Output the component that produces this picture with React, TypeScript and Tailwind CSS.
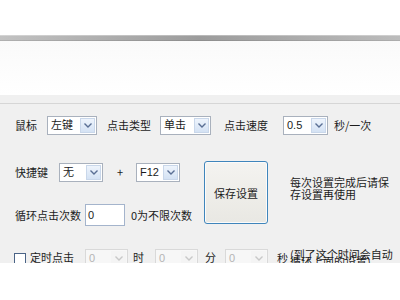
import React from 'react';

const cjk = { fontFamily: '"Noto Sans CJK SC", "Noto Sans", sans-serif' };

type ComboProps = {
  value: string;
  width: string;
  disabled?: boolean;
};

// Win7-style combo box with the blue drop button
const Combo: React.FC<ComboProps> = ({ value, width, disabled }) => (
  <div
    className={`${width} h-[19px] shrink-0 flex items-stretch border ${
      disabled ? 'border-[#d9d9d9] bg-[#f7f7f7]' : 'border-[#a9b1bd] bg-white'
    }`}
  >
    <span
      className={`flex-1 flex items-center pl-[3px] text-[11px] leading-none ${
        disabled ? 'text-[#b5b5b5]' : 'text-[#1a1a1a]'
      }`}
      style={{ fontFamily: '"Liberation Sans", "Noto Sans CJK SC", sans-serif' }}
    >
      {value}
    </span>
    <span
      className={`w-[15px] m-[1px] flex items-center justify-center ${
        disabled ? 'bg-[#f4f4f4]' : 'bg-gradient-to-b from-[#eef4fc] to-[#d4e2f4] border border-[#c9d7ea]'
      }`}
    >
      <svg width="8" height="5" viewBox="0 0 8 5">
        <path
          d="M0.5 0.5 L4 4 L7.5 0.5"
          fill="none"
          stroke={disabled ? '#c8c8c8' : '#5a6f94'}
          strokeWidth="1.4"
        />
      </svg>
    </span>
  </div>
);

export default function App() {
  return (
    <div className="w-[400px] h-[300px] bg-white overflow-hidden" style={cjk}>
      <div className="h-[35px]" />
      <div className="h-[6px] flex flex-col">
        <div className="h-[1px] bg-gradient-to-r from-[#d4d4d4] via-[#b8b8b8] to-[#d0d0d0]" />
        <div className="h-[4px] bg-gradient-to-r from-[#c2c2c2] via-[#9c9c9c] to-[#bcbcbc]" />
        <div className="h-[1px] bg-gradient-to-r from-[#b0b0b0] via-[#8e8e8e] to-[#adadad]" />
      </div>
      <div className="h-[54px] bg-gradient-to-b from-[#fafafa] to-white" />

      <div className="h-[168px] bg-[#f0f0f0] overflow-hidden text-[11px] leading-none text-[#1c1c1c]">
        <div className="h-[8px]" />
        <div className="h-[1px] bg-[#d6d6d6]" />

        {/* row 1 */}
        <div className="mt-[12px] flex items-center pl-[15px]">
          <span className="w-[32px]">鼠标</span>
          <Combo value="左键" width="w-[50px]" />
          <span className="w-[63px] pl-[10px]">点击类型</span>
          <Combo value="单击" width="w-[51px]" />
          <span className="w-[72px] pl-[13px]">点击速度</span>
          <Combo value="0.5" width="w-[45px]" />
          <span className="pl-[6px]">秒/一次</span>
        </div>

        {/* rows 2-3 with save button */}
        <div className="mt-[26px] flex items-start pl-[15px]">
          <div className="w-[189px] flex flex-col">
            <div className="mt-[2px] flex items-center">
              <span className="w-[44px]">快捷键</span>
              <Combo value="无" width="w-[44px]" />
              <span className="w-[33px] pl-[14px]">+</span>
              <Combo value="F12" width="w-[44px]" />
            </div>
            <div className="mt-[22px] flex items-center">
              <span className="w-[70px]">循环点击次数</span>
              <div
                className="w-[40px] h-[22px] bg-white border border-[#a4b4cc] flex items-center pl-[2px] text-[11px]"
                style={{ fontFamily: '"Liberation Sans", sans-serif' }}
              >
                0
              </div>
              <span className="pl-[6px]">0为不限次数</span>
            </div>
          </div>
          <button className="w-[64px] h-[63px] shrink-0 rounded-[3px] border border-[#3f85bb] bg-gradient-to-b from-[#f4f3f0] to-[#e9e8e3] shadow-[inset_0_0_0_1px_#fbfbfb] text-[11px] text-[#1c1c1c] flex items-center justify-center pt-[2px]">
            保存设置
          </button>
          <p className="mt-[15px] ml-[22px] leading-[12px]">
            每次设置完成后请保
            <br />
            存设置再使用
          </p>
        </div>

        {/* row 4 */}
        <div className="mt-[23px] flex items-start pl-[14px]">
          <span className="mt-[4px] w-[12px] h-[12px] shrink-0 border border-[#4a6386] bg-white" />
          <span className="w-[59px] pl-[4px] mt-[3px]">定时点击</span>
          <Combo value="0" width="w-[43px]" disabled />
          <span className="w-[27px] pl-[5px] mt-[3px]">时</span>
          <Combo value="0" width="w-[43px]" disabled />
          <span className="w-[27px] pl-[7px] mt-[3px]">分</span>
          <Combo value="0" width="w-[43px]" disabled />
          <span className="w-[22px] pl-[9px] mt-[4px]">秒</span>
          <p className="mt-[2px] leading-[7px] text-[11px]">
            (到了这个时间会自动
            <br />
            循环上面的设置)
          </p>
        </div>
      </div>
    </div>
  );
}
